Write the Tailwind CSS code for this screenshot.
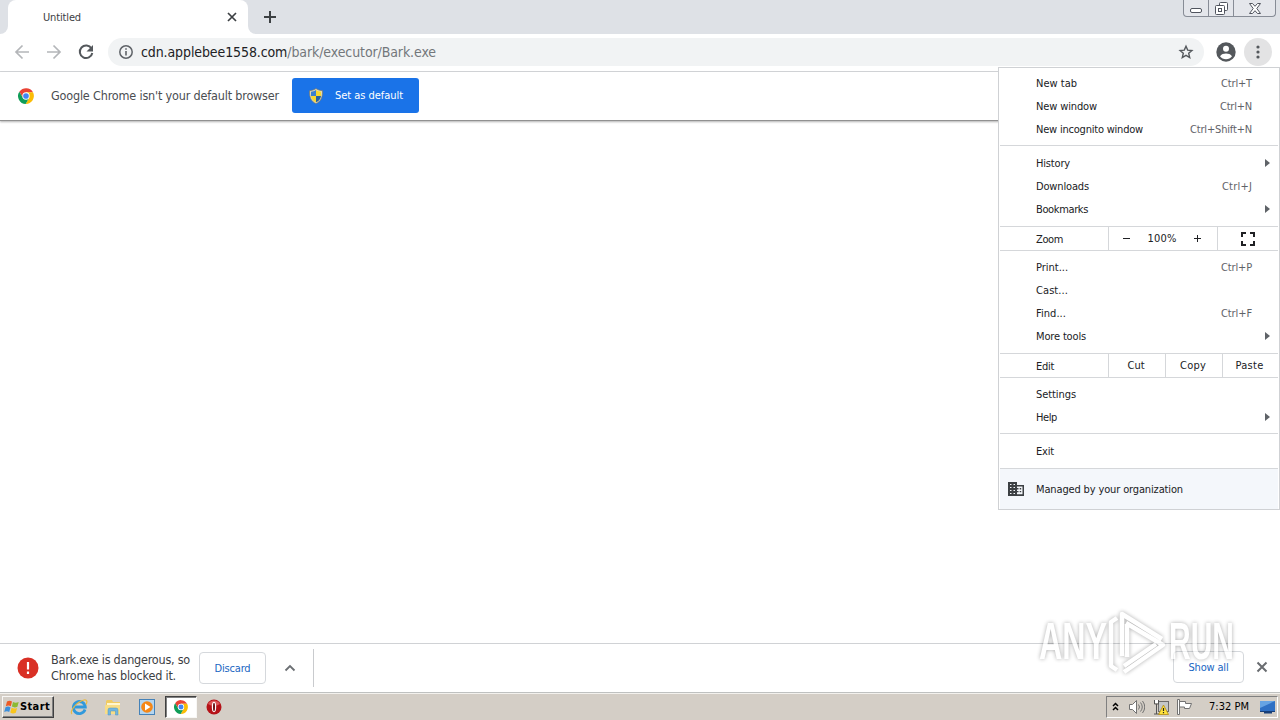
<!DOCTYPE html>
<html lang="en">
<head>
    <meta charset="UTF-8">
    <meta name="viewport" content="width=device-width, initial-scale=1.0">
    <title>Untitled</title>
    <script src="https://cdn.jsdelivr.net/npm/@tailwindcss/browser@4"></script>
</head>
<body class="relative w-[1280px] h-[720px] overflow-hidden flex flex-col bg-white font-['DejaVu_Sans_Condensed','Noto_Sans',sans-serif] text-[11px] text-[#202124] whitespace-nowrap">

    <!-- Shared symbols -->
    <svg class="hidden">
        <symbol id="chrome" viewBox="0 0 48 48">
            <path fill="#ea4335" d="M4 11 14.5 29.5 24 24V13h21A24 24 0 0 0 4 11z"/>
            <path fill="#fbbc05" d="M45 13H24l9.5 16.5L23 48A24 24 0 0 0 45 13z"/>
            <path fill="#0f9d58" d="M4 11l10.5 18.5h19L23 48A24 24 0 0 1 4 11z"/>
            <circle cx="24" cy="24" r="11" fill="#fff"/>
            <circle cx="24" cy="24" r="8.5" fill="#4285f4"/>
        </symbol>
        <symbol id="arrow" viewBox="0 0 5 8"><path fill="#5f6368" d="M0 0l5 4-5 4z"/></symbol>
    </svg>

    <!-- Tab strip -->
    <header class="h-[34px] shrink-0 bg-[#dee1e6] flex items-start">
        <div class="w-2 h-[34px] bg-white"><div class="h-full bg-[#dee1e6] rounded-br-lg"></div></div>
        <div class="w-60 h-[34px] bg-white rounded-t-lg flex items-center justify-between pl-[35px] pr-[11px]">
            <span class="mt-[2px] text-[#3c4043]" data-w="38">Untitled</span>
            <svg class="w-[10px] h-[10px]" viewBox="0 0 10 10"><path d="M1 1l8 8M9 1l-8 8" stroke="#3c4043" stroke-width="1.7"/></svg>
        </div>
        <div class="w-2 h-[34px] bg-white"><div class="h-full bg-[#dee1e6] rounded-bl-lg"></div></div>
        <svg class="w-3 h-3 mt-[11px] ml-2" viewBox="0 0 12 12"><path d="M6 0v12M0 6h12" stroke="#3c4043" stroke-width="2"/></svg>
        <div class="ml-auto mr-[4px] w-[93px] h-[17px] flex border border-t-0 border-[#878c96] rounded-b-[4px] bg-[#e4e6eb]">
            <div class="w-[25px] border-r border-[#878c96] flex justify-center">
                <svg class="w-3 h-[6px] mt-[7px]" viewBox="0 0 12 6"><rect x=".5" y="1.5" width="11" height="4" rx="1.5" fill="#fff" stroke="#50545e"/></svg>
            </div>
            <div class="w-[25px] border-r border-[#878c96] flex justify-center">
                <svg class="w-[13px] h-[13px] mt-[2px]" viewBox="0 0 13 13" fill="#fff" stroke="#50545e"><rect x="4.5" y=".5" width="8" height="8" rx="1"/><rect x=".5" y="3.5" width="9" height="9" rx="1"/><rect x="3.5" y="6.5" width="3" height="3"/></svg>
            </div>
            <div class="grow flex justify-center">
                <svg class="w-3 h-[11px] mt-[3px]" viewBox="0 0 12 11"><path d="M.5.5h3L6 3.300 8.500.5h3L7.800 5.500l3.700 5h-3L6 7.700l-2.500 2.800h-3l3.700-5z" fill="#fff" stroke="#50545e"/></svg>
            </div>
        </div>
    </header>

    <!-- Toolbar -->
    <div class="h-[38px] shrink-0 flex items-center bg-white border-b border-[#d5d7da] pl-[14px] pr-2 pb-px">
        <svg class="w-4 h-4" viewBox="0 0 16 16" fill="none" stroke="#b4b6b9" stroke-width="1.7"><path d="M15 8H2M8.500 1.500L2 8l6.500 6.500"/></svg>
        <svg class="w-4 h-4 ml-4" viewBox="0 0 16 16" fill="none" stroke="#b4b6b9" stroke-width="1.7"><path d="M1 8h13M7.500 1.500L14 8l-6.500 6.500"/></svg>
        <svg class="w-4 h-4 ml-4" viewBox="0 0 16 16"><path d="M13.500 4.500A6.300 6.300 0 1 0 14.300 9" fill="none" stroke="#54585c" stroke-width="2"/><path d="M15 1v6.500H8.500z" fill="#54585c"/></svg>
        <div class="ml-[14px] w-[1096px] h-7 rounded-full bg-[#f1f3f4] flex items-center pl-[11px] pr-[10px]">
            <svg class="w-[14px] h-[14px]" viewBox="0 0 14 14"><circle cx="7" cy="7" r="6.200" fill="none" stroke="#5f6368" stroke-width="1.500"/><path d="M7 6v4.500M7 3.300v1.500" stroke="#5f6368" stroke-width="1.600"/></svg>
            <span class="ml-2 text-[14px] text-[#73777b]" data-w="295"><span class="text-[#202124]">cdn.applebee1558.com</span>/bark/executor/Bark.exe</span>
            <svg class="w-4 h-4 ml-auto" viewBox="0 0 16 16"><path d="M8 2.200l1.700 3.900 4.200.4-3.200 2.800 1 4.200L8 11.300l-3.700 2.200 1-4.200-3.200-2.800 4.200-.4z" fill="none" stroke="#54585c" stroke-width="1.400"/></svg>
        </div>
        <svg class="w-5 h-5 ml-3" viewBox="0 0 20 20"><circle cx="10" cy="10" r="9.700" fill="#54585c"/><circle cx="10" cy="6.700" r="3" fill="#fff"/><path d="M4 14.200c1.200-2 3.800-2.700 6-2.700s4.800.7 6 2.700c-1.300 2-3.600 3-6 3s-4.700-1-6-3z" fill="#fff"/></svg>
        <div class="ml-2 w-7 h-7 rounded-full bg-[#e3e3e4] flex items-center justify-center">
            <svg class="w-1 h-[14px]" viewBox="0 0 4 14" fill="#54585c"><circle cx="2" cy="2" r="1.600"/><circle cx="2" cy="7" r="1.600"/><circle cx="2" cy="12" r="1.600"/></svg>
        </div>
    </div>

    <!-- Default browser prompt -->
    <div class="h-[49px] shrink-0 flex items-center border-b border-[#919191] shadow-[0_1px_2px_rgba(0,0,0,0.3)] pl-[18px] pb-px">
        <svg class="w-4 h-4"><use href="#chrome"/></svg>
        <span class="ml-[17px] w-[241px] mt-px text-[12.500px] text-[#4a4d51]"><span data-w="228">Google Chrome isn't your default browser</span></span>
        <button class="w-[127px] h-[35px] rounded-[3px] bg-[#1a73e8] text-white flex items-center pl-4">
            <svg class="w-4 h-4" viewBox="0 0 16 16">
                <path d="M8 .5C6 2 4 2.500 1.500 2.700 1.200 9 3 13.500 8 15.500c5-2 6.800-6.500 6.500-12.800C12 2.500 10 2 8 .5z" fill="#ded8b8" stroke="#77705c" stroke-width=".6"/>
                <path d="M8 2C6.500 3 5 3.500 3 3.800V8h5z" fill="#3a7fd0"/><path d="M8 2c1.500 1 3 1.500 5 1.800V8H8z" fill="#f7d72f"/>
                <path d="M3 8c.4 3 2 5 5 6.200V8z" fill="#f7d72f"/><path d="M13 8c-.4 3-2 5-5 6.200V8z" fill="#27619f"/>
            </svg>
            <span class="ml-[11px] mt-px" data-w="68">Set as default</span>
        </button>
    </div>

    <main class="grow"></main>

    <!-- Download shelf -->
    <div class="h-[49px] shrink-0 flex items-center bg-white border-t border-[#d0d2d5] pl-[17px] pr-3">
        <svg class="w-[22px] h-[22px]" viewBox="0 0 22 22"><circle cx="11" cy="11" r="10.500" fill="#d93025"/><path d="M11 5v7.500M11 14.500V17" stroke="#fff" stroke-width="2.200"/></svg>
        <p class="ml-3 w-[148px] text-[12.500px] leading-4 text-[#3c4043]"><span data-w="139">Bark.exe is dangerous, so</span><br><span data-w="125">Chrome has blocked it.</span></p>
        <button class="w-[67px] h-8 rounded-[4px] border border-[#d5d8dc] text-[#1a66c2] pt-[2px]"><span data-w="36">Discard</span></button>
        <svg class="w-3 h-2 ml-[18px]" viewBox="0 0 12 8"><path d="M1.500 6.500L6 2l4.500 4.500" fill="none" stroke="#6b6f73" stroke-width="1.800"/></svg>
        <div class="w-px h-[38px] ml-[17px] bg-[#c9cbce]"></div>
        <button class="ml-auto mb-[2px] w-[71px] h-8 rounded-[4px] border border-[#d5d8dc] text-[#1a66c2] pt-[2px]"><span data-w="40">Show all</span></button>
        <svg class="w-3 h-3 ml-3 mb-[2px]" viewBox="0 0 12 12"><path d="M1.500 1.500l9 9M10.500 1.500l-9 9" stroke="#696c70" stroke-width="2"/></svg>
    </div>

    <!-- Taskbar -->
    <footer class="h-7 shrink-0 flex items-center bg-[#d4cec6] border-t border-[#bfc1c0] shadow-[inset_0_1px_0_#f3f1ed] text-black pl-[2px] pr-[2px] pt-px">
        <div class="w-[52px] h-[22px] flex items-center pl-px border border-[#f8f7f5] border-r-[#404040] border-b-[#404040] shadow-[inset_-1px_-1px_0_#808080]">
            <svg class="w-4 h-4" viewBox="0 0 16 16">
                <path d="M3 2.500c2-1.300 3.500-1 5 0L6.800 7.300c-1.500-1-3-1-5-.1z" fill="#ed5a24"/><path d="M9 3c1.800 1.100 3.600 1 5.700 0l-1.300 4.800c-2 .9-3.800.8-5.500-.2z" fill="#8cba32"/>
                <path d="M1.500 8.200c2-1 3.500-.8 5 .2l-1.300 4.700c-1.600-1-3-1-5 0z" fill="#3c8fdb"/><path d="M7.600 8.800c1.700 1 3.400 1.100 5.500.2l-1.300 4.700c-2 1-3.800.9-5.500-.2z" fill="#f9c51c"/>
            </svg>
            <span class="font-bold" data-w="30">Start</span>
        </div>
        <svg class="w-[18px] h-[18px] ml-4" viewBox="0 0 18 18" fill="none">
            <path d="M15 11.500A6 6 0 1 1 15.300 9H5" stroke="#3099dc" stroke-width="2.800"/><path d="M2 16C-1 14 6 4 14 2c4-.8 3 3 2 4.500" stroke="#e9b93f" stroke-width="1.200"/>
        </svg>
        <svg class="w-[18px] h-[18px] ml-[16px]" viewBox="0 0 18 18">
            <path d="M2 3l1-1h5l1 2h7v10H2z" fill="#f0cb62"/><path d="M3 5h13v3H3z" fill="#fff6cd"/><path d="M1 7h15v9H1z" fill="#f8dd86"/><path d="M4 17v-5q0-2 2-2h6q2 0 2 2v5h-2.500v-4h-5v4z" fill="#72b5df" stroke="#4c94bd" stroke-width=".5"/>
        </svg>
        <svg class="w-4 h-4 ml-[17px]" viewBox="0 0 16 16"><rect x=".5" y=".5" width="15" height="15" fill="#b4d5ef" stroke="#4582b8"/><circle cx="8" cy="8" r="5.800" fill="#f58716"/><path d="M6 4.500l5.500 3.500L6 11.500z" fill="#fff"/></svg>
        <div class="w-8 h-[22px] ml-[10px] flex items-center justify-center bg-white border border-[#404040] border-r-[#f8f7f5] border-b-[#f8f7f5] shadow-[inset_1px_1px_0_#808080]">
            <svg class="w-[14px] h-[14px]"><use href="#chrome"/></svg>
        </div>
        <svg class="w-4 h-4 ml-[9px]" viewBox="0 0 16 16"><circle cx="8" cy="8" r="7.500" fill="#b51218"/><path d="M2 5a7 7 0 0 1 12 0q-6 4-12 0z" fill="#dd5556"/><ellipse cx="8" cy="8" rx="2.200" ry="5.200" fill="#fff"/><ellipse cx="8" cy="8" rx="1" ry="4.200" fill="#6d1014"/></svg>

        <div class="ml-auto w-[172px] h-[22px] flex items-center border border-[#808080] border-r-white border-b-white pl-[5px]">
            <svg class="w-[7px] h-[9px] mb-[2px]" viewBox="0 0 7 9"><path d="M1 4l2.500-2.500L6 4M1 8l2.500-2.500L6 8" fill="none" stroke="#000" stroke-width="1.500"/></svg>
            <svg class="w-4 h-4 ml-[10px]" viewBox="0 0 16 16" stroke="#727272"><path d="M.5 5.500h3L7.500 1.500v13L3.500 10.500h-3z" fill="#fff"/><path d="M9.500 5.500q2 2.500 0 5M11.500 3.500q3.500 4.500 0 9M13.500 2q4.500 6 0 12" fill="none"/></svg>
            <svg class="w-4 h-4 ml-2" viewBox="0 0 16 16"><rect x="5.500" y="2.500" width="10" height="10" fill="#c4c7c8" stroke="#6b6b6b"/><path d="M1.500 1v4h4V1M3.500 5v10M1 15h6" fill="none" stroke="#555"/><path d="M2 1h3v3H2z" fill="#fff"/><path d="M10.500 6l5 9.500h-10z" fill="#ffe33d" stroke="#b38c11" stroke-width=".8"/><path d="M10.500 9v3M10.500 13v1.200" stroke="#222" stroke-width="1.200"/></svg>
            <svg class="w-4 h-4 ml-2" viewBox="0 0 16 16" fill="#fff" stroke="#727272"><path d="M2.500 2.500h6v2h6l-2 5H7.500v-1.500h-5z"/><path d="M.5.500h2v15h-2z"/></svg>
            <span class="ml-4 mt-px" data-w="40">7:32 PM</span>
            <svg class="w-[15px] h-[14px] ml-[11px]" viewBox="0 0 15 14"><path d="M0 1h15v10H0z" fill="#2f70c4"/><path d="M0 1h15L0 8z" fill="#66a3e3"/><path d="M0 11h15v1H0zM4 12h8v1.500H4z" fill="#183f78"/></svg>
        </div>
    </footer>

    <!-- Chrome menu -->
    <nav class="absolute left-[998px] top-[67px] w-[282px] h-[443px] border border-[#cfd1d4] bg-white px-px [&_span]:mt-[2px] [&_li_svg]:mb-px">
        <ul class="pt-1 pb-1 border-b border-[#d5d7da]">
            <li class="h-[23px] flex items-center justify-between pl-9 pr-[26px]"><span data-w="41">New tab</span><span class="text-[#5f6368]" data-w="31">Ctrl+T</span></li>
            <li class="h-[23px] flex items-center justify-between pl-9 pr-[26px]"><span data-w="61">New window</span><span class="text-[#5f6368]" data-w="32">Ctrl+N</span></li>
            <li class="h-[23px] flex items-center justify-between pl-9 pr-[26px]"><span data-w="107">New incognito window</span><span class="text-[#5f6368]" data-w="62">Ctrl+Shift+N</span></li>
        </ul>
        <ul class="pt-[6px] pb-[5px] border-b border-[#d5d7da]">
            <li class="h-[23px] flex items-center justify-between pl-9 pr-2"><span data-w="34">History</span><svg class="w-[5px] h-2"><use href="#arrow"/></svg></li>
            <li class="h-[23px] flex items-center justify-between pl-9 pr-[26px]"><span data-w="53">Downloads</span><span class="text-[#5f6368]" data-w="30">Ctrl+J</span></li>
            <li class="h-[23px] flex items-center justify-between pl-9 pr-2"><span data-w="52">Bookmarks</span><svg class="w-[5px] h-2"><use href="#arrow"/></svg></li>
        </ul>
        <div class="h-6 flex items-stretch border-b border-[#d5d7da]">
            <div class="w-[108px] pl-9 flex items-center pt-px"><span data-w="27">Zoom</span></div>
            <div class="w-[110px] border-x border-[#d5d7da] flex items-center justify-between pl-[14px] pr-[16px]">
                <svg class="w-[7px] h-[7px]" viewBox="0 0 7 7"><path d="M0 3.500h7" stroke="#202124"/></svg>
                <span data-w="29">100%</span>
                <svg class="w-[7px] h-[7px]" viewBox="0 0 7 7"><path d="M0 3.500h7M3.500 0v7" stroke="#202124"/></svg>
            </div>
            <div class="grow flex items-center justify-center">
                <svg class="w-[14px] h-[14px]" viewBox="0 0 14 14"><path d="M1 5V1h4M9 1h4v4M13 9v4H9M5 13H1V9" fill="none" stroke="#202124" stroke-width="2"/></svg>
            </div>
        </div>
        <ul class="pt-[5px] pb-[5px] border-b border-[#d5d7da]">
            <li class="h-[23px] flex items-center justify-between pl-9 pr-[26px]"><span data-w="32">Print...</span><span class="text-[#5f6368]" data-w="31">Ctrl+P</span></li>
            <li class="h-[23px] flex items-center pl-9"><span data-w="32">Cast...</span></li>
            <li class="h-[23px] flex items-center justify-between pl-9 pr-[26px]"><span data-w="30">Find...</span><span class="text-[#5f6368]" data-w="31">Ctrl+F</span></li>
            <li class="h-[23px] flex items-center justify-between pl-9 pr-2"><span data-w="50">More tools</span><svg class="w-[5px] h-2"><use href="#arrow"/></svg></li>
        </ul>
        <div class="h-6 flex items-stretch border-b border-[#d5d7da]">
            <div class="w-[108px] pl-9 flex items-center pt-px"><span data-w="18">Edit</span></div>
            <div class="w-[57px] border-l border-[#d5d7da] flex items-center justify-center pr-[2px]"><span data-w="17">Cut</span></div>
            <div class="w-[57px] border-l border-[#d5d7da] flex items-center justify-center pr-[2px]"><span data-w="26">Copy</span></div>
            <div class="grow border-l border-[#d5d7da] flex items-center justify-center pr-[2px]"><span data-w="28">Paste</span></div>
        </div>
        <ul class="pt-[5px] pb-1 border-b border-[#d5d7da]">
            <li class="h-[23px] flex items-center pl-9"><span data-w="40">Settings</span></li>
            <li class="h-[23px] flex items-center justify-between pl-9 pr-2"><span data-w="21">Help</span><svg class="w-[5px] h-2"><use href="#arrow"/></svg></li>
        </ul>
        <div class="h-[35px] pt-[6px] pb-[5px] pl-9 flex items-center border-b border-[#d5d7da]"><span data-w="18">Exit</span></div>
        <div class="h-10 bg-[#f4f7fb] flex items-center pl-2">
            <svg class="w-4 h-[14px]" viewBox="0 0 16 14"><path fill="#3c4043" fill-rule="evenodd" d="M0 0h9v3h7v11H0zM2 2v1h1.500V2zM5.500 2v1H7V2zM2 5v1h1.500V5zM5.500 5v1H7V5zM2 8v1h1.500V8zM5.500 8v1H7V8zM2 11v1h1.500v-1zM5.500 11v1H7v-1zM9 4.500V6h1.500v1.500H9V9h1.500v1.200H9v2h5.500V4.500zM11.700 6h1.500v1.500h-1.500zM11.700 9h1.500v1.200h-1.500z"/></svg>
            <span class="ml-3" data-w="147">Managed by your organization</span>
        </div>
    </nav>

    <!-- Watermark -->
    <svg class="absolute left-[1036px] top-[606px] w-[200px] h-[68px] pointer-events-none overflow-visible drop-shadow-[0_0_2px_rgba(0,0,0,0.5)] opacity-65" viewBox="0 0 200 68">
        <g fill="#fff" font-family="Liberation Sans" font-weight="bold" font-size="52">
            <text x="3" y="53" textLength="68" lengthAdjust="spacingAndGlyphs">ANY</text>
            <text x="133" y="53" textLength="65" lengthAdjust="spacingAndGlyphs">RUN</text>
        </g>
        <path d="M81 12l-6 4v44l6 4M86 50V8l40 25M91 18v33M88 66l39-27-37-22M88 60l32-22" fill="none" stroke="#fff" stroke-width="4.500" stroke-linejoin="round"/>
    </svg>

    <script>
        // Spread each label over its own width with letter spacing
        function fitLabels() {
            document.querySelectorAll("[data-w]").forEach((el) => {
                el.style.letterSpacing = "0px";
                const gap = (Number(el.dataset.w) - el.getBoundingClientRect().width) / el.textContent.length;
                el.style.letterSpacing = `${gap}px`;
            });
        }
        window.addEventListener("load", fitLabels);
        document.fonts.ready.then(fitLabels);
    </script>

</body>
</html>
